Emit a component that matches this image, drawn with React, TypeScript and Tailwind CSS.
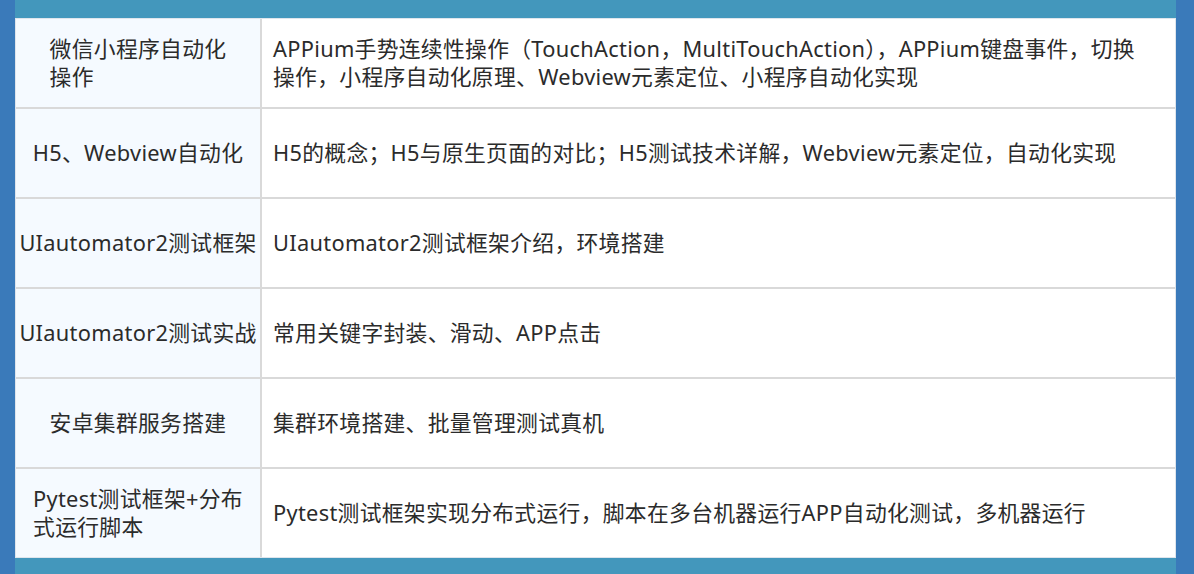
import React from "react";

const rows: { left: string[]; right: string[] }[] = [
  {
    left: ["微信小程序自动化", "操作"],
    right: [
      "APPium手势连续性操作（TouchAction，MultiTouchAction），APPium键盘事件，切换",
      "操作，小程序自动化原理、Webview元素定位、小程序自动化实现",
    ],
  },
  {
    left: ["H5、Webview自动化"],
    right: ["H5的概念；H5与原生页面的对比；H5测试技术详解，Webview元素定位，自动化实现"],
  },
  { left: ["UIautomator2测试框架"], right: ["UIautomator2测试框架介绍，环境搭建"] },
  { left: ["UIautomator2测试实战"], right: ["常用关键字封装、滑动、APP点击"] },
  { left: ["安卓集群服务搭建"], right: ["集群环境搭建、批量管理测试真机"] },
  {
    left: ["Pytest测试框架+分布", "式运行脚本"],
    right: ["Pytest测试框架实现分布式运行，脚本在多台机器运行APP自动化测试，多机器运行"],
  },
];

export default function App() {
  return (
    <div
      className="w-[1194px] h-[574px] bg-[#3a7aba] pl-[15px] pr-[18px] overflow-hidden"
      style={{ fontFamily: '"Noto Sans", "Noto Sans CJK SC", sans-serif' }}
    >
      <div className="h-full bg-[#4397bc] pt-[18px] pb-[16px]">
        <div className="h-full flex flex-col border border-[#dfe5ec] bg-white text-[#2b2b2b] text-[21.8px] leading-[28px] tracking-[0.3px]">
          {rows.map((r, i) => (
            <div
              key={i}
              className={`flex flex-1 ${i < rows.length - 1 ? "border-b-2 border-[#d9d9d9]" : ""}`}
            >
              <div className="w-[246px] shrink-0 bg-[#f5faff] border-r-2 border-[#d9d9d9] flex items-center justify-center">
                <div className="text-left whitespace-nowrap">
                  {r.left.map((l, j) => (
                    <div key={j}>{l}</div>
                  ))}
                </div>
              </div>
              <div className="flex-1 flex items-center pl-[11px]">
                <div className="whitespace-nowrap">
                  {r.right.map((l, j) => (
                    <div key={j}>{l}</div>
                  ))}
                </div>
              </div>
            </div>
          ))}
        </div>
      </div>
    </div>
  );
}
